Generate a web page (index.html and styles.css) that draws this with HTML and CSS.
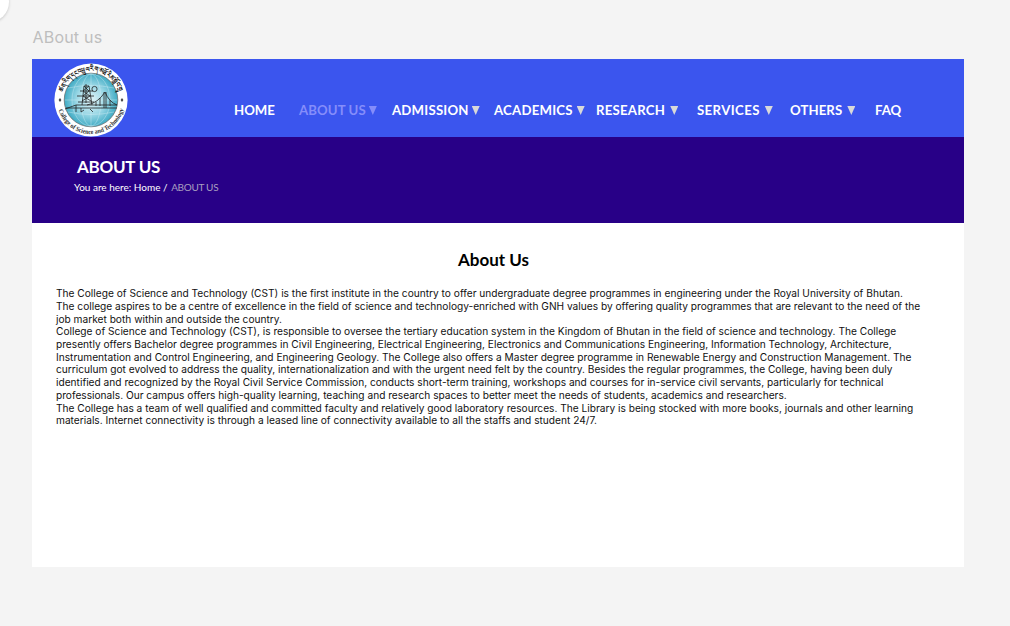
FILE: index.html
```html
<!DOCTYPE html>
<html lang="en">
<head>
<meta charset="utf-8">
<title>About us</title>
<link rel="stylesheet" href="styles.css">
</head>
<body>
<div class="knob"></div>
<div class="frame-label">ABout us</div>
<main class="frame">
  <header class="topbar">
    <svg class="logo" viewBox="-37 -37 74 74" role="img" aria-label="College of Science and Technology">
      <defs>
        <radialGradient id="globe"><stop offset="0" stop-color="#e2f4f8"/><stop offset=".55" stop-color="#9ad7e5"/><stop offset="1" stop-color="#3fabc4"/></radialGradient>
        <path id="arc-top" d="M-27.8 -7 A28.7 28.7 0 0 1 27.8 -7"/>
        <path id="arc-bottom" d="M-32.8 9 A34 34 0 0 0 32.8 9"/>
      </defs>
      <circle r="36.6" fill="#fff"/>
      <circle r="26.8" fill="url(#globe)" stroke="#666" stroke-width=".7"/>
      <g fill="none" stroke="#d5eef5" stroke-width=".4"><ellipse rx="10" ry="26"/><ellipse rx="19" ry="26"/><path d="M-26 0H26M-23-12Q0-17 23-12M-23 12Q0 17 23 12M0-26V26"/></g>
      <g fill="none" stroke="#222" stroke-width=".8"><path d="M-11-9H2M-14-4H3M-13 2H3M-5-16V3M-9 5L-7-14H-2L1 5M-7-14L-2-9L-8-4L0 1M-2-14L-8-9L-1-4L-9 1"/><path d="M-26 9L-15 5H26M-25 8H26M13-8V8M15-8V8M-4 5Q7 3 14-8Q18 2 26 5"/><path d="M-15 5V12M-10 8V12L-7 10M-1 9L2 12M5 2V6M9-2V6M19 0V6"/><circle cx="3.5" cy="-11" r="2.6"/></g>
      <path d="M-31-2l1.4 2-1.4 2-1.4-2zM31-2l1.4 2-1.4 2-1.4-2z" fill="#444"/>
      <text class="logo-script"><textPath href="#arc-top" startOffset="1" textLength="73" lengthAdjust="spacingAndGlyphs">ཚན་རིག་དང་འཕྲུལ་རིག་མཐོ་རིམ་སློབ་གྲྭ</textPath></text>
      <text class="logo-name"><textPath href="#arc-bottom" startOffset="1" textLength="87" lengthAdjust="spacingAndGlyphs">College of Science and Technology</textPath></text>
    </svg>
    <nav class="menu">
      <a class="item home">HOME</a>
      <a class="item about"><span>ABOUT US</span><i class="caret"></i></a>
      <a class="item admission"><span>ADMISSION</span><i class="caret"></i></a>
      <a class="item academics"><span>ACADEMICS</span><i class="caret"></i></a>
      <a class="item research"><span>RESEARCH</span><i class="caret"></i></a>
      <a class="item services"><span>SERVICES</span><i class="caret"></i></a>
      <a class="item others"><span>OTHERS</span><i class="caret"></i></a>
      <a class="item faq">FAQ</a>
    </nav>
  </header>
  <section class="banner">
    <h1>ABOUT US</h1>
    <p class="crumbs">You are here: Home / <span>ABOUT US</span></p>
  </section>
  <article class="content">
    <h2>About Us</h2>
    <p>The College of Science and Technology (CST) is the first institute in the country to offer undergraduate degree programmes in engineering under the Royal University of Bhutan.<br>The college aspires to be a centre of excellence in the field of science and technology-enriched with GNH values by offering quality programmes that are relevant to the need of the<br>job market both within and outside the country.</p>
    <p>College of Science and Technology (CST), is responsible to oversee the tertiary education system in the Kingdom of Bhutan in the field of science and technology. The College<br>presently offers Bachelor degree programmes in Civil Engineering, Electrical Engineering, Electronics and Communications Engineering, Information Technology, Architecture,<br>Instrumentation and Control Engineering, and Engineering Geology. The College also offers a Master degree programme in Renewable Energy and Construction Management. The<br>curriculum got evolved to address the quality, internationalization and with the urgent need felt by the country. Besides the regular programmes, the College, having been duly<br>identified and recognized by the Royal Civil Service Commission, conducts short-term training, workshops and courses for in-service civil servants, particularly for technical<br>professionals. Our campus offers high-quality learning, teaching and research spaces to better meet the needs of students, academics and researchers.</p>
    <p>The College has a team of well qualified and committed faculty and relatively good laboratory resources. The Library is being stocked with more books, journals and other learning<br>materials. Internet connectivity is through a leased line of connectivity available to all the staffs and student 24/7.</p>
  </article>
</main>
</body>
</html>
```

FILE: styles.css
```css
* { box-sizing: border-box; }
body { margin: 0; height: 626px; background: #f4f4f4; overflow: hidden; font-family: Inter, sans-serif; }
.knob { position: absolute; left: -31px; top: -18px; width: 40px; height: 40px; border-radius: 50%; background: #fff; box-shadow: 0 1px 3px rgba(0,0,0,.18); }
.frame-label { height: 59px; padding: 27px 0 0 32.5px; font-size: 16px; line-height: 20px; letter-spacing: .2px; color: #bebebe; }
.frame { margin-left: 32px; width: 932px; height: 508px; background: #fff; }
.topbar { display: flex; height: 78px; background: #3b55ee; padding-left: 22.3px; }
.logo { width: 74px; height: 74px; margin-top: 4px; flex: none; }
.logo-script { font: 600 6.8px "Noto Sans", serif; fill: #111; }
.logo-name { font: 700 6.6px "Liberation Serif", serif; fill: #333; }
.menu { display: flex; margin: 41px 0 0 105.7px; font: 700 13.2px/20px Lato, sans-serif; color: #fff; }
.item { display: flex; flex: none; white-space: nowrap; }
.home { width: 65px; }
.about { width: 93px; letter-spacing: .1px; color: #858dfa; }
.admission { width: 102px; letter-spacing: .22px; }
.academics { width: 102px; letter-spacing: .22px; }
.research { width: 101px; letter-spacing: .25px; }
.services { width: 93px; letter-spacing: .4px; }
.others { width: 85px; letter-spacing: .1px; }
.caret { width: 8px; height: 9px; margin: 6px 0 0 3px; background: #d9d9d9; clip-path: polygon(0 0, 100% 0, 50% 100%); }
.about .caret { background: #858dfa; }
.academics .caret { margin-left: 4px; }
.research .caret { margin-left: 5px; }
.services .caret { margin-left: 5px; }
.others .caret { margin-left: 5px; }
.banner { height: 86px; background: #280087; padding: 19px 0 0 42px; color: #fff; font-family: Lato, sans-serif; }
h1 { margin: 0 0 0 3px; font-size: 17px; line-height: 22px; font-weight: 700; letter-spacing: -.25px; }
.crumbs { margin: 0; font-size: 10px; line-height: 18px; }
.crumbs span { margin-left: 1px; color: #a99fc0; letter-spacing: -.3px; }
.content { padding: 26px 0 0 24px; font-size: 10.17px; line-height: 12.7px; color: #111; white-space: nowrap; }
.content h2 { margin: 0 0 16.2px; width: 875px; text-align: center; font: 700 17px/22px Lato, sans-serif; color: #000; }
.content p { margin: 0; }
```
